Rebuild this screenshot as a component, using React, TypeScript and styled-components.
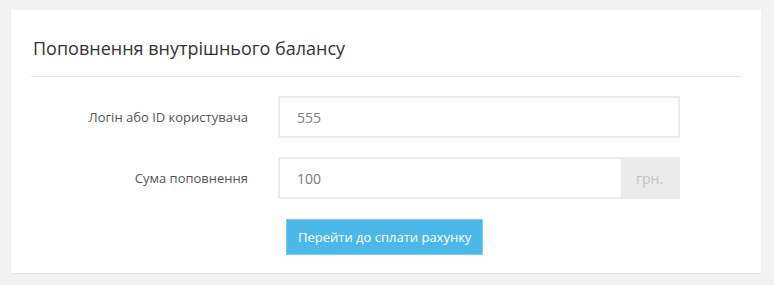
import React from "react";
import styled, { createGlobalStyle } from "styled-components";

const GlobalStyle = createGlobalStyle`
  html, body {
    margin: 0;
    padding: 0;
    background: #f2f2f2;
    font-family: "Open Sans", "Liberation Sans", sans-serif;
  }
`;

const Page = styled.div`
  padding: 10px 13px 12px 11px;
`;

const Card = styled.div`
  background: #fff;
  box-shadow: 0 1px 1px rgba(0, 0, 0, 0.06);
  padding: 0 20px 18px 20px;
`;

const Title = styled.h3`
  margin: 0;
  padding: 26px 0 16px 2px;
  font-size: 18px;
  font-weight: 400;
  line-height: 24px;
  color: #333;
  border-bottom: 1px solid #e8e8e8;
`;

const Form = styled.form`
  display: flex;
  flex-direction: column;
  gap: 19px;
  padding-top: 19px;
`;

const Row = styled.div`
  display: grid;
  grid-template-columns: 217px 402px;
  column-gap: 30px;
  align-items: center;
`;

const Label = styled.label`
  text-align: right;
  font-size: 13px;
  color: #555;
`;

const Group = styled.div`
  display: flex;
  border: 2px solid #ebebeb;
  height: 38px;
`;

const Input = styled.input`
  flex: 1;
  min-width: 0;
  border: none;
  outline: none;
  padding: 0 17px;
  font-family: inherit;
  font-size: 14px;
  color: #7a7a7a;
  background: #fff;
`;

const Addon = styled.span`
  width: 57px;
  display: flex;
  align-items: center;
  justify-content: center;
  background: #ebebeb;
  color: #c2c2c2;
  font-size: 14px;
`;

const Actions = styled.div`
  padding-left: 255px;
  margin-top: 1px;
`;

const Button = styled.button`
  height: 36px;
  padding: 0 11px;
  border: 1px solid #7fcdf0;
  background: #4cb7e9;
  color: #fff;
  font-family: inherit;
  font-size: 13px;
  cursor: pointer;
`;

export default function App() {
  return (
    <>
      <GlobalStyle />
      <Page>
        <Card>
          <Title>Поповнення внутрішнього балансу</Title>
          <Form onSubmit={(e) => e.preventDefault()}>
            <Row>
              <Label>Логін або ID користувача</Label>
              <Group>
                <Input defaultValue="555" />
              </Group>
            </Row>
            <Row>
              <Label>Сума поповнення</Label>
              <Group>
                <Input defaultValue="100" />
                <Addon>грн.</Addon>
              </Group>
            </Row>
            <Actions>
              <Button type="submit">Перейти до сплати рахунку</Button>
            </Actions>
          </Form>
        </Card>
      </Page>
    </>
  );
}
